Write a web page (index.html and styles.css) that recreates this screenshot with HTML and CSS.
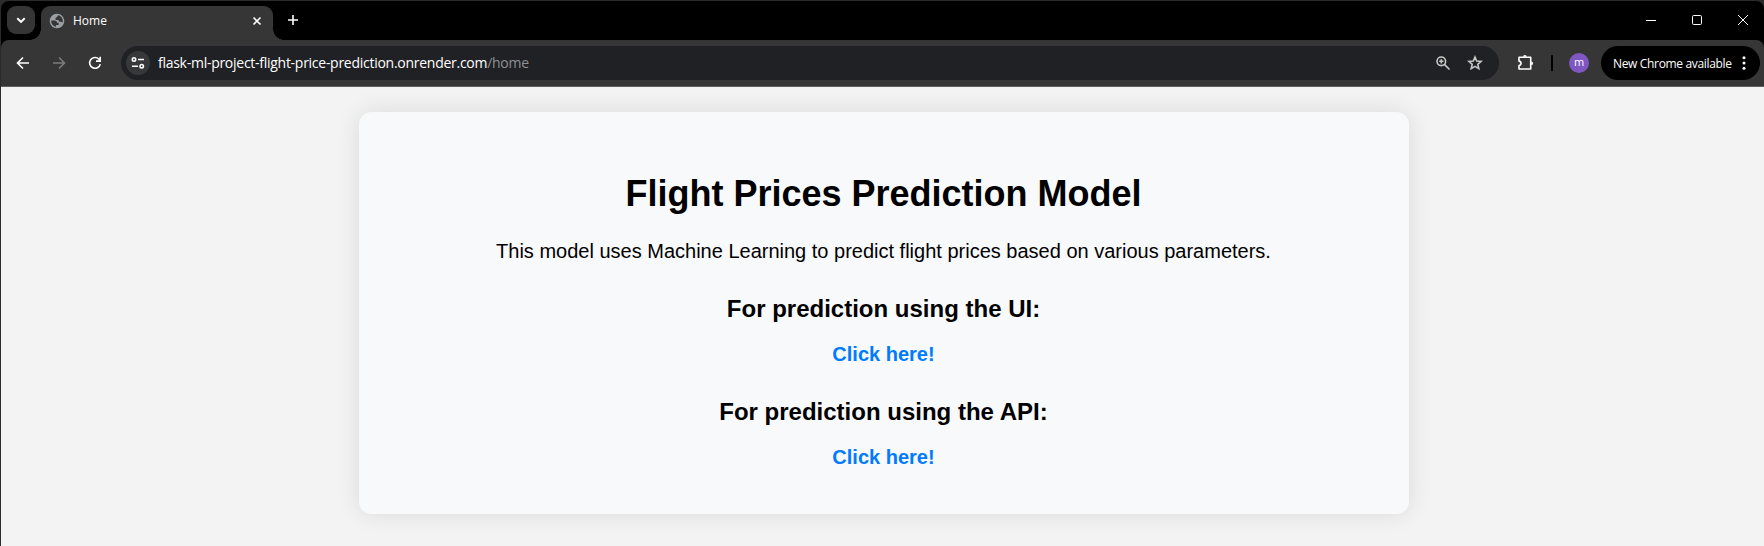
FILE: index.html
```html
<!DOCTYPE html>
<html lang="en">
<head>
<meta charset="utf-8">
<title>Home</title>
<link rel="stylesheet" href="styles.css">
</head>
<body>
<div class="window">
  <header class="tabstrip">
    <div class="tabsearch"><svg width="28" height="28" viewBox="0 0 28 28"><path d="M10.3 12.3l3.7 3.6 3.7-3.6" class="line bold"/></svg></div>
    <div class="tab">
      <svg class="globe" width="16" height="16" viewBox="1 1 22 22"><path fill="#9aa0a6" d="M12 2C6.480 2 2 6.480 2 12s4.480 10 10 10 10-4.480 10-10S17.520 2 12 2zM4 12v-.800h4.500c2.300 0 3.500 1 3.500 3.200h2.300v3.200h-3.600v2.300C6.800 19.400 4 16.100 4 12zm16 0c0 .900-.100 1.700-.400 2.400-.600-.900-1.400-1.200-2.400-1.200-2.100 0-3.200-.900-3.200-2.600h-4V8.200c0-1.100.900-1.500 2.300-1.500 0-1.300.500-2 1.600-2.500 3.500.900 6.100 4 6.100 7.800z"/></svg>
      <span class="tab-title">Home</span>
      <svg class="tab-close" width="16" height="16" viewBox="0 0 16 16"><path d="M4.500 4.500l7 7M11.500 4.500l-7 7" class="line"/></svg>
    </div>
    <svg class="newtab" width="16" height="16" viewBox="0 0 16 16"><path d="M8 3v10M3 8h10" class="line"/></svg>
    <div class="controls">
      <svg width="12" height="12" viewBox="0 0 12 12"><path d="M1 6.500h10" class="thin"/></svg>
      <svg width="12" height="12" viewBox="0 0 12 12"><rect x="1.500" y="1.500" width="9" height="9" rx="1.200" class="thin"/></svg>
      <svg width="12" height="12" viewBox="0 0 12 12"><path d="M1 1l10 10M11 1L1 11" class="thin"/></svg>
    </div>
  </header>
  <nav class="toolbar">
    <svg class="nav-icon" width="16" height="16" viewBox="0 0 16 16"><path d="M14 8H3M8 2.500L2.500 8 8 13.500" class="line"/></svg>
    <svg class="nav-icon dim" width="16" height="16" viewBox="0 0 16 16"><path d="M2 8h11M8 2.500L13.500 8 8 13.500" class="line"/></svg>
    <svg class="nav-icon" width="16" height="16" viewBox="0 0 16 16"><path d="M13.300 9.100A5.400 5.400 0 1 1 12 4.200l1.200 1.300M13.200 1.800v4.300H9" class="line"/></svg>
    <div class="address">
      <div class="site-info"><svg width="24" height="24" viewBox="0 0 24 24"><g class="line"><circle cx="8" cy="8.500" r="1.700"/><path d="M12 8.500h6M6 15.200h6"/><circle cx="15.700" cy="15.200" r="1.700"/></g></svg></div>
      <div class="url"><span class="host">flask-ml-project-flight-price-prediction.onrender.com</span><span class="path">/home</span></div>
      <svg class="magnify" width="16" height="16" viewBox="0 0 16 16"><g class="line"><circle cx="6.300" cy="6.300" r="4.300"/><path d="M9.600 9.600l4.900 4.900M4.200 6.300h4.200M6.300 4.200v4.200"/></g></svg>
      <svg class="star" width="16" height="16" viewBox="0 0 16 16"><path d="M8 2l1.700 4 4.400.4-3.300 2.900 1 4.300L8 11.400l-3.800 2.200 1-4.300-3.300-2.900 4.400-.4z" class="line"/></svg>
    </div>
    <svg class="puzzle" width="18" height="18" viewBox="0 0 18 18"><path d="M2 3.300h11.700v11.700H2V11.600c2.700-.4 2.700-4.100 0-4.500z" class="line" stroke-linejoin="round"/><path d="M6 2.800a1.900 1.900 0 0 1 3.800 0zM14.200 7.400a1.900 1.900 0 0 1 0 3.800z" fill="#fff"/></svg>
    <span class="divider"></span>
    <span class="avatar">m</span>
    <div class="update"><span>New Chrome available</span><svg width="4" height="16" viewBox="0 0 4 16" fill="#fff"><circle cx="2" cy="2.800" r="1.500"/><circle cx="2" cy="8" r="1.500"/><circle cx="2" cy="13.200" r="1.500"/></svg></div>
  </nav>
  <main class="page">
    <section class="card">
      <h1>Flight Prices Prediction Model</h1>
      <p>This model uses Machine Learning to predict flight prices based on various parameters.</p>
      <h2>For prediction using the UI:</h2>
      <a href="#">Click here!</a>
      <h2>For prediction using the API:</h2>
      <a href="#">Click here!</a>
    </section>
  </main>
</div>
</body>
</html>
```
FILE: styles.css
```css
* { box-sizing: border-box; }
body { margin: 0; background: #2b2b2b; font-family: "Open Sans", "Noto Sans", sans-serif; }
svg { display: block; flex: none; }
.line { fill: none; stroke: currentColor; stroke-width: 1.6; }
.bold { stroke-width: 2; }
.thin { fill: none; stroke: #fff; stroke-width: 1; }
.window { height: 546px; padding: 1px 0 0 1px; display: flex; flex-direction: column; color: #fff; }
.tabstrip { position: relative; z-index: 1; height: 39px; flex: none; display: flex; background: #000; border-radius: 8px 8px 0 0; }
.tabsearch { width: 28px; height: 28px; margin: 5px 0 0 6px; border-radius: 9px; background: #353535; }
.tab { position: relative; width: 232px; height: 34px; margin: 5px 0 0 6px; padding: 0 8px 5px; display: flex; align-items: center; background: #363636; border-radius: 9px 9px 0 0; }
.tab::before, .tab::after { content: ""; position: absolute; bottom: 0; width: 11px; height: 11px; }
.tab::before { left: -11px; background: radial-gradient(circle at 0 0, transparent 10.5px, #363636 11px); }
.tab::after { right: -11px; background: radial-gradient(circle at 100% 0, transparent 10.5px, #363636 11px); }
.tab-title { margin-left: 8px; padding-top: 1px; font-size: 12px; line-height: 16px; }
.tab-close { margin-left: auto; }
.newtab { margin: 11px 0 0 12px; }
.controls { display: flex; gap: 34px; margin: 13px 15px 0 auto; }
.toolbar { position: relative; height: 47px; flex: none; display: flex; align-items: center; padding: 0 4px 0 14px; background: #363636; border-bottom: 1px solid #606060; border-radius: 8px 8px 0 0; box-shadow: 0 -8px 0 #000; }
.nav-icon { margin-right: 20px; }
.dim { color: #7c7c7c; }
.address { width: 1378px; height: 34px; margin-left: -2px; padding: 0 16px 0 5px; display: flex; align-items: center; border-radius: 17px; background: #202124; }
.site-info { width: 24px; height: 24px; border-radius: 50%; background: #37383a; }
.url { margin-left: 8px; font-size: 14px; line-height: 20px; letter-spacing: -.27px; white-space: nowrap; }
.path { color: #8e9194; }
.magnify { margin-left: auto; color: #c7c7c7; }
.star { margin-left: 16px; color: #c7c7c7; }
.puzzle { margin-left: 18px; }
.divider { width: 2px; height: 16px; margin-left: 16px; background: #000; }
.avatar { width: 20px; height: 20px; margin-left: 16px; border-radius: 50%; background: #7e57c2; font-size: 11px; line-height: 18px; text-align: center; }
.update { width: 159px; height: 34px; margin-left: auto; padding: 0 14px 0 12px; display: flex; align-items: center; justify-content: space-between; border-radius: 17px; background: #000; font-size: 12px; letter-spacing: -.34px; white-space: nowrap; }
.page { flex: 1; padding-top: 25px; background: #f3f3f3; overflow: hidden; font-family: "Liberation Sans", Arial, sans-serif; color: #000; }
.card { width: 1050px; height: 402px; margin-left: 358px; padding: 61px 1px 0 0; border-radius: 12.5px; background: #f8f9fb; box-shadow: 0 0 25px rgba(0, 0, 0, .1); text-align: center; }
.card h1 { margin: 0; font-size: 36px; line-height: 42px; }
.card p { margin: 24px 0 0; font-size: 20px; line-height: 24px; }
.card h2 { margin: 32px 0 19px; font-size: 24px; line-height: 28px; }
.card a { display: block; font-size: 20px; font-weight: bold; line-height: 24px; color: #007bff; text-decoration: none; }
```
